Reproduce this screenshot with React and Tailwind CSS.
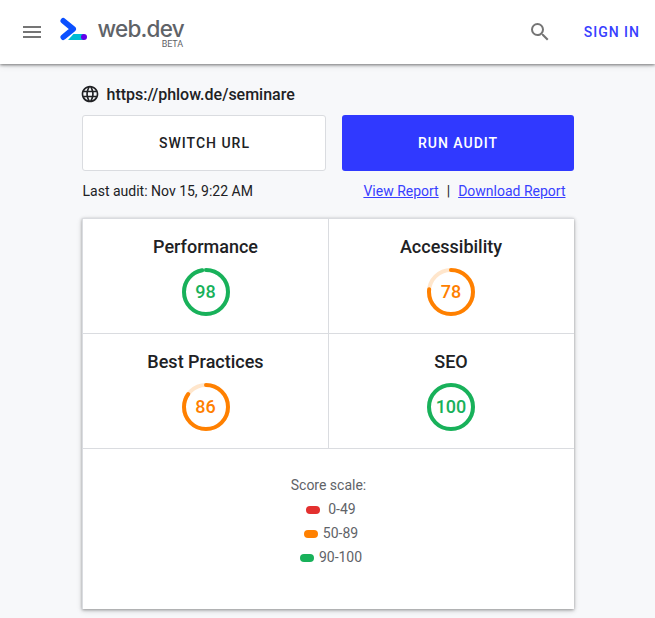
import React from "react";

const AUDITS = [
  { name: "Performance", score: 98, color: "#18b15a" },
  { name: "Accessibility", score: 78, color: "#ff8000" },
  { name: "Best Practices", score: 86, color: "#ff8000" },
  { name: "SEO", score: 100, color: "#18b15a" },
];

function Gauge({ score, color }) {
  const r = 22;
  const length = 2 * Math.PI * r;
  const filled = score === 100 ? length : (length * score) / 100 - 2;
  return (
    <div className="relative mt-[9px] flex size-12 items-center justify-center" style={{ color }}>
      <svg className="absolute inset-0" width="48" height="48" viewBox="0 0 48 48" fill="none" stroke="currentColor" strokeWidth="4">
        <circle cx="24" cy="24" r={r} strokeOpacity="0.2" />
        <circle
          cx="24"
          cy="24"
          r={r}
          strokeLinecap="round"
          strokeDasharray={`${filled} ${length}`}
          transform="rotate(-90 24 24)"
        />
      </svg>
      <span className="relative text-[18px] leading-6 font-medium">{score}</span>
    </div>
  );
}

function Header() {
  return (
    <header className="relative flex h-16 items-center bg-white shadow-[0_1px_3px_rgba(0,0,0,0.5),0_1px_8px_rgba(0,0,0,0.1)]">
      <svg className="ml-5 shrink-0" width="24" height="24" viewBox="0 0 24 24" fill="#757575">
        <path d="M3 18h18v-2H3v2zm0-5h18v-2H3v2zm0-7v2h18V6H3z" />
      </svg>
      <svg className="mb-[6px] ml-4 shrink-0" width="28" height="24" viewBox="60 17 28 24">
        <path d="M68 40l5.5-6H84v6z" fill="#00bcd4" />
        <circle cx="84" cy="37" r="3" fill="#6200ea" />
        <path d="M63.3 20.8L73.2 29L63.3 37.2" fill="none" stroke="#0b50ff" strokeWidth="5.6" strokeLinecap="round" strokeLinejoin="round" />
      </svg>
      <div className="ml-[9px] flex h-16 w-[87px] flex-col items-end pt-[18px] text-[#5f6368]">
        <span className="font-['Inter',sans-serif] text-[22.5px] leading-[22px] font-medium tracking-[-0.75px] whitespace-nowrap">web.dev</span>
        <span className="mr-[1px] text-[9px] leading-[9px] tracking-[-0.1px]">BETA</span>
      </div>
      <svg className="ml-auto shrink-0" width="24" height="24" viewBox="0 0 24 24" fill="#757575">
        <path d="M15.5 14h-.79l-.28-.27A6.471 6.471 0 0 0 16 9.5 6.5 6.5 0 1 0 9.5 16c1.61 0 3.09-.59 4.23-1.57l.27.28v.79l5 4.99L20.49 19l-4.99-5zm-6 0C7.01 14 5 11.99 5 9.5S7.01 5 9.5 5 14 7.01 14 9.5 11.99 14 9.5 14z" />
      </svg>
      <a className="mr-[15px] ml-8 text-[14px] font-medium tracking-[1px] text-[#3740ff]">SIGN IN</a>
    </header>
  );
}

function Legend({ color, label, gap }) {
  return (
    <div className="ml-[5px] flex h-6 items-center">
      <span className={`mt-[2px] h-2 w-[14px] rounded-full ${color} ${gap}`} />
      <span>{label}</span>
    </div>
  );
}

export default function App() {
  return (
    <div className="h-[618px] w-[655px] overflow-hidden bg-[#f7f8fa] font-['Roboto',sans-serif] text-[#202124]">
      <Header />
      <main className="ml-[82px] w-[492px] pt-[18px]">
        <div className="flex h-6 items-center">
          <svg className="-ml-[2px]" width="20" height="20" viewBox="0 0 24 24" fill="currentColor">
            <path d="M11.99 2C6.47 2 2 6.48 2 12s4.47 10 9.99 10C17.52 22 22 17.52 22 12S17.52 2 11.99 2zm6.93 6h-2.95a15.65 15.65 0 0 0-1.38-3.56A8.03 8.03 0 0 1 18.92 8zM12 4.04c.83 1.2 1.48 2.53 1.91 3.96h-3.82c.43-1.43 1.08-2.76 1.91-3.96zM4.26 14C4.1 13.36 4 12.69 4 12s.1-1.36.26-2h3.38c-.08.66-.14 1.32-.14 2s.06 1.34.14 2H4.26zm.82 2h2.95c.32 1.25.78 2.45 1.38 3.56A7.987 7.987 0 0 1 5.08 16zm2.95-8H5.08a7.987 7.987 0 0 1 4.33-3.56A15.65 15.65 0 0 0 8.03 8zM12 19.96c-.83-1.2-1.48-2.53-1.91-3.96h3.82c-.43 1.43-1.08 2.76-1.91 3.96zM14.34 14H9.66c-.09-.66-.16-1.32-.16-2s.07-1.35.16-2h4.68c.09.65.16 1.32.16 2s-.07 1.34-.16 2zm.25 5.56c.6-1.11 1.06-2.31 1.38-3.56h2.95a8.03 8.03 0 0 1-4.33 3.56zM16.36 14c.08-.66.14-1.32.14-2s-.06-1.34-.14-2h3.38c.16.64.26 1.31.26 2s-.1 1.36-.26 2h-3.38z" />
          </svg>
          <span className="ml-[6.5px] pt-px text-[16px] leading-6 font-medium">https://phlow.de/seminare</span>
        </div>
        <div className="mt-[9px] flex h-14 gap-4 text-[14px] font-medium tracking-[1px]">
          <button className="w-[244px] rounded-[3px] border border-[#dadce0] bg-white pl-px">SWITCH URL</button>
          <button className="flex-1 rounded-[3px] bg-[#3039ff] text-white">RUN AUDIT</button>
        </div>
        <div className="mt-2 flex h-6 items-center justify-between pr-[8.5px] pl-[0.5px] text-[14px]">
          <span>Last audit: Nov 15, 9:22 AM</span>
          <span>
            <a className="text-[#3740ff] underline">View Report</a>
            <span className="mx-2">|</span>
            <a className="text-[#3740ff] underline">Download Report</a>
          </span>
        </div>
        <section className="mt-[15px] h-[391px] border-t border-l border-[#dadce0] bg-white shadow-[0_1px_3px_rgba(0,0,0,0.35),0_2px_6px_rgba(0,0,0,0.12)]">
          <div className="grid grid-cols-[246px_245px]">
            {AUDITS.map((audit, i) => (
              <div
                key={audit.name}
                className={`flex h-[115px] flex-col items-center border-b border-[#dadce0] pt-4 ${i % 2 === 0 ? "border-r" : "pr-px"}`}
              >
                <h2 className="text-[18px] leading-6 font-medium">{audit.name}</h2>
                <Gauge score={audit.score} color={audit.color} />
              </div>
            ))}
          </div>
          <div className="flex flex-col items-center pt-6 text-[14px] leading-6 text-[#5f6368]">
            <div>Score scale:</div>
            <Legend color="bg-[#e3302f]" gap="mr-2" label="0-49" />
            <Legend color="bg-[#ff8000]" gap="mr-[5px]" label="50-89" />
            <Legend color="bg-[#18b15a]" gap="mr-[5px]" label="90-100" />
          </div>
        </section>
      </main>
    </div>
  );
}
